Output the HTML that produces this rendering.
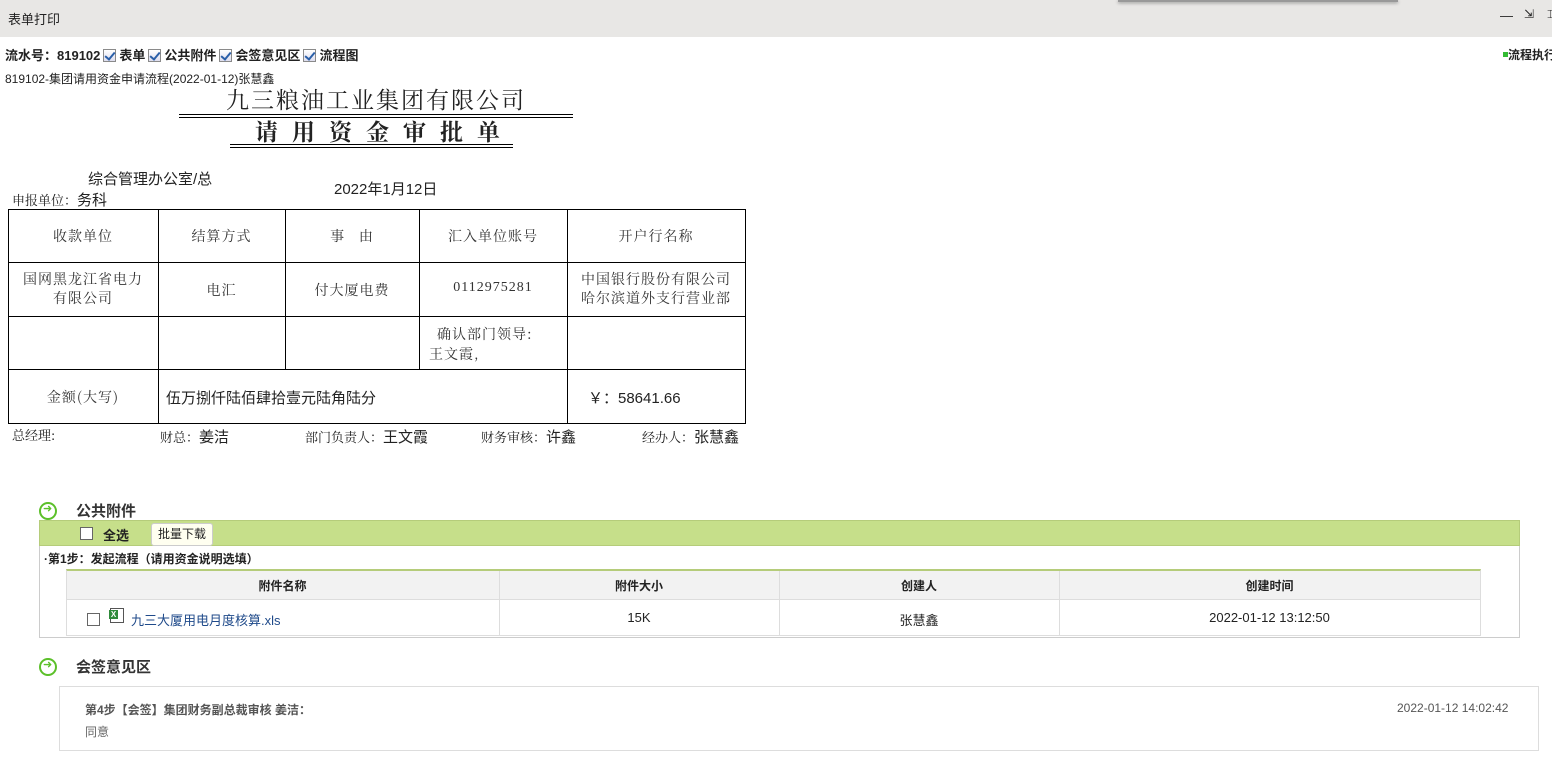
<!DOCTYPE html>
<html><head><meta charset="utf-8"><style>
*{margin:0;padding:0;box-sizing:border-box}
body{width:1552px;height:766px;overflow:hidden;background:#fff;font-family:"Liberation Sans","Noto Sans CJK SC",sans-serif;color:#222;position:relative}
.a{position:absolute;white-space:nowrap}
.cb{display:inline-block;width:13px;height:13px;border:1px solid #8a8a8a;background:linear-gradient(#fff,#dde);vertical-align:-2px;position:relative;margin:0 3px}
.cb:after{content:"";position:absolute;left:3px;top:0px;width:4px;height:8px;border:solid #2a5fa8;border-width:0 2px 2px 0;transform:rotate(40deg)}
.ser{font-family:"Noto Serif CJK SC","Liberation Serif",serif}
.v{position:absolute;background:#000;width:1px}
.h{position:absolute;background:#000;height:1px}
.c{position:absolute;text-align:center;font-size:14px;color:#333;font-family:"Noto Serif CJK SC",serif;letter-spacing:1px}
.ic{position:absolute;width:18px;height:18px;border:2px solid #5cc02a;border-radius:50%}
.ic:after{content:"➜";position:absolute;left:2px;top:-2px;font-size:11px;color:#5cc02a}
.ub{display:inline-block;width:13px;height:13px;border:1px solid #666;background:#fff}
</style></head><body>
<div class="a" style="left:0;top:0;width:1552px;height:37px;background:#e8e7e5"></div>
<div class="a" style="left:1118px;top:0;width:280px;height:2px;background:#999;box-shadow:0 1px 3px #888"></div>
<div class="a" style="left:8px;top:9px;font-size:13px">表单打印</div>
<div class="a" style="left:1500px;top:8px;font-size:13px">—</div>
<div class="a" style="left:1524px;top:7px;font-size:12px">⇲</div>
<div class="a" style="left:1547px;top:7px;font-size:12px">⌶</div>

<div class="a" style="left:5px;top:45px;font-size:13px;font-weight:bold">流水号：819102<span class="cb"></span>表单<span class="cb"></span>公共附件<span class="cb"></span>会签意见区<span class="cb"></span>流程图</div>
<div class="a" style="left:1503px;top:46px;font-size:12px;font-weight:bold"><span style="display:inline-block;width:5px;height:5px;background:#3b3;vertical-align:2px"></span>流程执行</div>
<div class="a" style="left:5px;top:70px;font-size:12px">819102-集团请用资金申请流程(2022-01-12)张慧鑫</div>

<div class="a ser" style="left:226px;top:82px;font-size:23px;letter-spacing:2px">九三粮油工业集团有限公司</div>
<div class="h" style="left:179px;top:114px;width:394px"></div>
<div class="h" style="left:179px;top:117px;width:394px"></div>
<div class="a ser" style="left:255px;top:114px;font-size:23px;letter-spacing:14px;font-weight:bold">请用资金审批单</div>
<div class="h" style="left:230px;top:144px;width:283px"></div>
<div class="h" style="left:230px;top:147px;width:283px"></div>

<div class="a" style="left:88px;top:168px;font-size:15px">综合管理办公室/总</div>
<div class="a" style="left:12px;top:189px;font-size:13px;font-family:'Noto Serif CJK SC',serif">申报单位：<span style="font-size:15px;font-family:'Liberation Sans','Noto Sans CJK SC',sans-serif">务科</span></div>
<div class="a" style="left:334px;top:178px;font-size:15px">2022年1月12日</div>

<div class="h" style="left:8px;top:209px;width:738px"></div>
<div class="h" style="left:8px;top:262px;width:738px"></div>
<div class="h" style="left:8px;top:316px;width:738px"></div>
<div class="h" style="left:8px;top:369px;width:738px"></div>
<div class="h" style="left:8px;top:423px;width:738px"></div>
<div class="v" style="left:8px;top:209px;height:215px"></div>
<div class="v" style="left:158px;top:209px;height:215px"></div>
<div class="v" style="left:285px;top:209px;height:161px"></div>
<div class="v" style="left:419px;top:209px;height:161px"></div>
<div class="v" style="left:567px;top:209px;height:215px"></div>
<div class="v" style="left:745px;top:209px;height:215px"></div>

<div class="c" style="left:8px;top:226px;width:150px">收款单位</div>
<div class="c" style="left:158px;top:226px;width:127px">结算方式</div>
<div class="c" style="left:285px;top:226px;width:134px">事&nbsp;&nbsp;&nbsp;由</div>
<div class="c" style="left:419px;top:226px;width:148px">汇入单位账号</div>
<div class="c" style="left:567px;top:226px;width:178px">开户行名称</div>
<div class="c" style="left:8px;top:270px;width:150px;line-height:19px">国网黑龙江省电力<br>有限公司</div>
<div class="c" style="left:158px;top:280px;width:127px">电汇</div>
<div class="c" style="left:285px;top:280px;width:134px">付大厦电费</div>
<div class="c" style="left:419px;top:280px;width:148px;font-family:'Liberation Serif',serif">0112975281</div>
<div class="c" style="left:567px;top:270px;width:178px;line-height:19px">中国银行股份有限公司<br>哈尔滨道外支行营业部</div>
<div class="a" style="left:437px;top:324px;font-size:14px;line-height:20px;font-family:'Noto Serif CJK SC',serif;color:#333;letter-spacing:1px">确认部门领导:<br><span style="margin-left:-8px">王文霞,</span></div>
<div class="c" style="left:8px;top:387px;width:150px">金额(大写)</div>
<div class="a" style="left:166px;top:387px;font-size:15px">伍万捌仟陆佰肆拾壹元陆角陆分</div>
<div class="a" style="left:588px;top:387px;font-size:15px">￥：58641.66</div>

<div class="a" style="left:12px;top:425px;font-size:13px;font-family:'Noto Serif CJK SC',serif">总经理:</div>
<div class="a" style="left:160px;top:426px;font-size:13px;font-family:'Noto Serif CJK SC',serif">财总：<span style="font-size:15px;font-family:'Noto Sans CJK SC',sans-serif">姜洁</span></div>
<div class="a" style="left:305px;top:426px;font-size:13px;font-family:'Noto Serif CJK SC',serif">部门负责人：<span style="font-size:15px;font-family:'Noto Sans CJK SC',sans-serif">王文霞</span></div>
<div class="a" style="left:481px;top:426px;font-size:13px;font-family:'Noto Serif CJK SC',serif">财务审核：<span style="font-size:15px;font-family:'Noto Sans CJK SC',sans-serif">许鑫</span></div>
<div class="a" style="left:642px;top:426px;font-size:13px;font-family:'Noto Serif CJK SC',serif">经办人：<span style="font-size:15px;font-family:'Noto Sans CJK SC',sans-serif">张慧鑫</span></div>

<div class="ic" style="left:39px;top:502px"></div>
<div class="a" style="left:76px;top:500px;font-size:15px;font-weight:bold;color:#333">公共附件</div>
<div class="a" style="left:39px;top:520px;width:1481px;height:118px;border:1px solid #ccc;border-top:none"></div>
<div class="a" style="left:39px;top:520px;width:1481px;height:26px;background:#c6df8a;border:1px solid #b5cc7a"></div>
<div class="a" style="left:80px;top:527px"><span class="ub"></span></div>
<div class="a" style="left:103px;top:525px;font-size:13px;font-weight:bold">全选</div>
<div class="a" style="left:151px;top:523px;width:62px;height:23px;background:#fffff0;border:1px solid #ccc;border-radius:3px;font-size:12px;text-align:center;line-height:21px">批量下载</div>
<div class="a" style="left:44px;top:550px;font-size:12px;font-weight:bold">·第1步：发起流程（请用资金说明选填）</div>
<div class="a" style="left:66px;top:569px;width:1415px;height:67px;border:1px solid #ddd;border-top:2px solid #b5cc7a"></div>
<div class="a" style="left:67px;top:571px;width:1413px;height:29px;background:#f2f2f2;border-bottom:1px solid #ddd"></div>
<div class="v" style="left:499px;top:571px;height:65px;background:#ddd"></div>
<div class="v" style="left:779px;top:571px;height:65px;background:#ddd"></div>
<div class="v" style="left:1059px;top:571px;height:65px;background:#ddd"></div>
<div class="a" style="left:66px;top:577px;width:433px;text-align:center;font-size:12px;font-weight:bold">附件名称</div>
<div class="a" style="left:499px;top:577px;width:280px;text-align:center;font-size:12px;font-weight:bold">附件大小</div>
<div class="a" style="left:779px;top:577px;width:280px;text-align:center;font-size:12px;font-weight:bold">创建人</div>
<div class="a" style="left:1059px;top:577px;width:421px;text-align:center;font-size:12px;font-weight:bold">创建时间</div>
<div class="a" style="left:87px;top:613px"><span class="ub"></span></div>
<div class="a" style="left:110px;top:608px;width:14px;height:15px;border:1px solid #555;background:#fff"><div style="position:absolute;left:-2px;top:1px;width:9px;height:9px;background:#2f8a3a;color:#fff;font-size:8px;line-height:9px;text-align:center;font-weight:bold">X</div></div>
<div class="a" style="left:131px;top:610px;font-size:13px;color:#1f4a8a">九三大厦用电月度核算.xls</div>
<div class="a" style="left:499px;top:610px;width:280px;text-align:center;font-size:13px">15K</div>
<div class="a" style="left:779px;top:610px;width:280px;text-align:center;font-size:13px">张慧鑫</div>
<div class="a" style="left:1059px;top:610px;width:421px;text-align:center;font-size:13px">2022-01-12 13:12:50</div>

<div class="ic" style="left:39px;top:658px"></div>
<div class="a" style="left:76px;top:656px;font-size:15px;font-weight:bold;color:#333">会签意见区</div>
<div class="a" style="left:59px;top:686px;width:1480px;height:65px;border:1px solid #ddd"></div>
<div class="a" style="left:85px;top:701px;font-size:12px;font-weight:bold;color:#555">第4步【会签】集团财务副总裁审核 姜洁：</div>
<div class="a" style="left:1397px;top:701px;font-size:12px;color:#555">2022-01-12 14:02:42</div>
<div class="a" style="left:85px;top:723px;font-size:12px;color:#666">同意</div>
</body></html>
